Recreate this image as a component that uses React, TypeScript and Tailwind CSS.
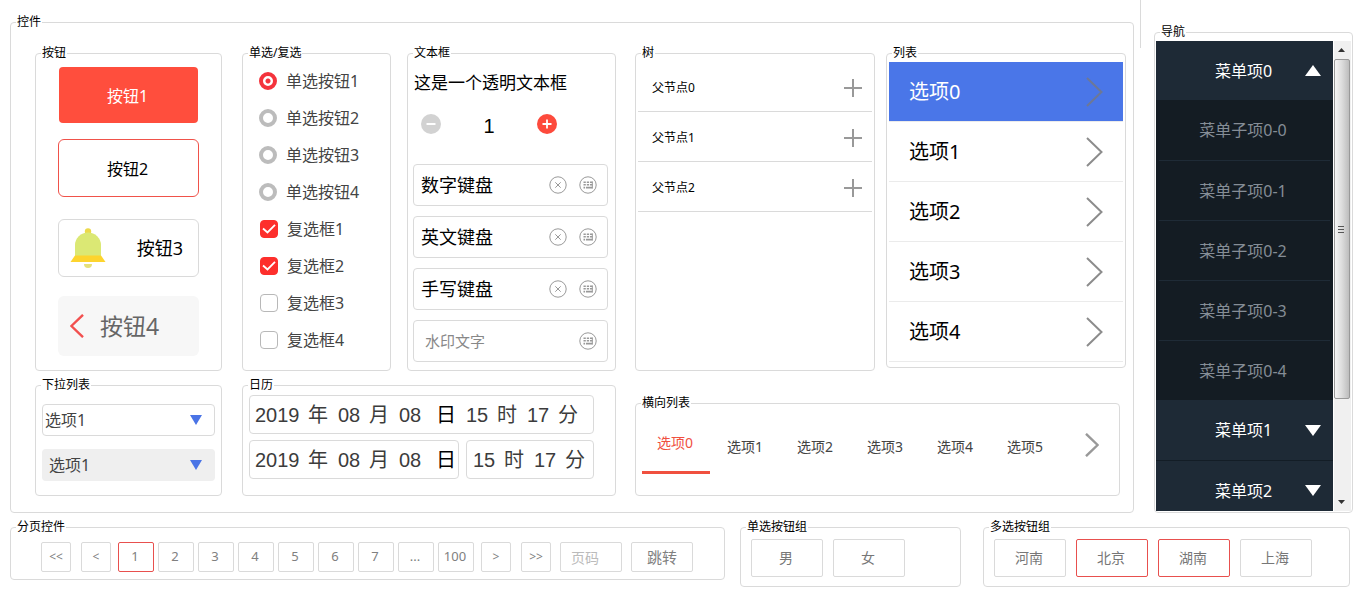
import { ReactNode } from 'react'
import { clsx } from 'clsx'

const radios = ['单选按钮1', '单选按钮2', '单选按钮3', '单选按钮4']
const checks = [
  { label: '复选框1', checked: true },
  { label: '复选框2', checked: true },
  { label: '复选框3', checked: false },
  { label: '复选框4', checked: false },
]
const keyboards = ['数字键盘', '英文键盘', '手写键盘']
const nodes = ['父节点0', '父节点1', '父节点2']
const options = ['选项0', '选项1', '选项2', '选项3', '选项4']
const tabs = ['选项0', '选项1', '选项2', '选项3', '选项4', '选项5']
const subItems = ['菜单子项0-0', '菜单子项0-1', '菜单子项0-2', '菜单子项0-3', '菜单子项0-4']
const pages = ['1', '2', '3', '4', '5', '6', '7', '...', '100']
const genders = ['男', '女']
const provinces = [
  { label: '河南', checked: false },
  { label: '北京', checked: true },
  { label: '湖南', checked: true },
  { label: '上海', checked: false },
]

function Panel({ title, className, children }: { title: string; className?: string; children: ReactNode }) {
  return (
    <fieldset className={clsx('min-w-0 rounded border border-[#dadada]', className)}>
      <legend className="ml-[5px] px-px text-xs leading-4 text-black">{title}</legend>
      {children}
    </fieldset>
  )
}

function BellIcon() {
  return (
    <svg viewBox="0 0 36 40" className="h-10 w-9" aria-hidden="true">
      <circle cx="18" cy="3.5" r="3.2" fill="#ecd94a" />
      <path d="M14 36h8a4 4 0 0 1-8 0z" fill="#e6e07a" />
      <path d="M5 28V17a13 12.5 0 0 1 26 0v11z" fill="#dbe874" />
      <path d="M5 27.500h26L35.500 34H.5z" fill="#fdd42e" />
    </svg>
  )
}

function Chevron({ className, width = 2 }: { className: string; width?: number }) {
  return (
    <svg viewBox="0 0 17 30" className={className} fill="none" stroke="currentColor" strokeWidth={width} aria-hidden="true">
      <path d="M1 1l14.500 14L1 29" />
    </svg>
  )
}

function ClearIcon() {
  return (
    <svg viewBox="0 0 18 18" className="size-[18px]" fill="none" stroke="#999" aria-hidden="true">
      <circle cx="9" cy="9" r="8.200" />
      <path d="M6.300 6.300l5.400 5.400M11.700 6.300l-5.400 5.400" />
    </svg>
  )
}

function KeyboardIcon() {
  return (
    <svg viewBox="0 0 18 18" className="size-[18px]" fill="none" stroke="#999" aria-hidden="true">
      <circle cx="9" cy="9" r="8.200" />
      <path d="M4.500 6.300h2.300M7.800 6.300h2.300M11 6.300h2.500M4.500 8.700h2.300M7.800 8.700h2.300M11 8.700h2.500M4.500 11.600h1.600M7 11.600h6.500" strokeWidth="1.600" />
      <path d="M13.300 5.500v7" />
    </svg>
  )
}

function Triangle({ up, className }: { up?: boolean; className: string }) {
  return (
    <svg viewBox="0 0 16 11" preserveAspectRatio="none" className={className} fill="currentColor" aria-hidden="true">
      <path d={up ? 'M8 0l8 11H0z' : 'M0 0h16L8 11z'} />
    </svg>
  )
}

function DropDown({ label, className }: { label: string; className: string }) {
  return (
    <div className="relative">
      <select aria-label={label} className={clsx('block h-8 w-full appearance-none rounded text-base leading-5 text-[#444]', className)}>
        <option>选项1</option>
      </select>
      <Triangle className="pointer-events-none absolute top-[11px] right-[13px] h-[10px] w-3 text-[#4a74e6]" />
    </div>
  )
}

function DatePart({ value, unit, label, wide, dark }: { value: string; unit: string; label: string; wide?: boolean; dark?: boolean }) {
  return (
    <label className="flex items-center">
      <input
        aria-label={label}
        defaultValue={value}
        className={clsx('bg-transparent font-["Liberation_Sans",sans-serif]', wide ? 'w-[45px]' : 'w-[23px]')}
      />
      <span className={dark ? 'ml-[14px] text-black' : 'ml-2'}>{unit}</span>
    </label>
  )
}

function DateFields() {
  return (
    <>
      <DatePart value="2019" unit="年" label="年" wide />
      <DatePart value="08" unit="月" label="月" />
      <DatePart value="08" unit="日" label="日" dark />
    </>
  )
}

function TimeFields() {
  return (
    <>
      <DatePart value="15" unit="时" label="时" />
      <DatePart value="17" unit="分" label="分" />
    </>
  )
}

function ButtonsPanel() {
  return (
    <Panel title="按钮">
      <div className="flex flex-col px-[22px] pt-1.5 pb-[14px]">
        <button type="button" className="mx-px h-14 rounded bg-[#ff4e3d] pt-px pr-0.5 text-base text-white">按钮1</button>
        <button type="button" className="mt-4 h-[58px] rounded-md border border-[#f0524a] bg-white pt-px pr-0.5 text-base text-black">按钮2</button>
        <button type="button" className="mt-[22px] flex h-[58px] items-center justify-between rounded-md border border-[#dadada] pr-[15px] pl-[11px] text-lg text-black">
          <BellIcon />
          按钮3
        </button>
        <button type="button" className="mt-[19px] flex h-[60px] items-center gap-4 rounded-md bg-[#f7f7f7] pl-3 text-[23px] text-[#666]">
          <Chevron className="h-6 w-[14px] rotate-180 text-[#f2504f]" width={3} />
          按钮4
        </button>
      </div>
    </Panel>
  )
}

function ChoicePanel() {
  return (
    <Panel title="单选/复选">
      <div className="pt-px pb-3 pl-4 text-base leading-5 text-[#444]">
        {radios.map((label, i) => (
          <label key={label} className="flex h-[37px] items-center gap-[9px]">
            <input
              type="radio"
              name="choice"
              defaultChecked={i === 0}
              className="size-[18px] appearance-none rounded-full border-4 border-[#bcbcbc] bg-white checked:border-[#f4333c] checked:bg-[radial-gradient(circle,#f4333c_2px,#fff_3px)]"
            />
            {label}
          </label>
        ))}
        {checks.map((item) => (
          <label key={item.label} className="flex h-[37px] items-center gap-[9px] pl-px">
            <span className="grid size-[18px] place-items-center">
              <input
                type="checkbox"
                defaultChecked={item.checked}
                className="col-start-1 row-start-1 size-[18px] appearance-none rounded border border-[#b8b8b8] checked:border-[#fd2f2c] checked:bg-[#fd2f2c]"
              />
              <svg viewBox="0 0 18 18" className="pointer-events-none col-start-1 row-start-1 size-[18px]" fill="none" stroke="#fff" strokeWidth="1.800" aria-hidden="true">
                <path d="M3 8.500l4.500 4L15 4.800" />
              </svg>
            </span>
            {item.label}
          </label>
        ))}
      </div>
    </Panel>
  )
}

function TextPanel() {
  return (
    <Panel title="文本框">
      <div className="pt-1.5 pr-[7px] pb-2 pl-[5px]">
        <input aria-label="透明文本框" defaultValue="这是一个透明文本框" className="block h-7 w-full bg-transparent pl-px text-[17px] text-black" />
        <div className="mt-[15px] ml-2 flex h-7 w-[136px] items-center justify-between">
          <button type="button" aria-label="减少">
            <svg viewBox="0 0 20 20" className="size-5" aria-hidden="true">
              <circle cx="10" cy="10" r="10" fill="#d2d2d2" />
              <path d="M5.500 10h9" stroke="#fff" strokeWidth="2" />
            </svg>
          </button>
          <input aria-label="数量" defaultValue="1" className='w-10 bg-transparent pt-1 text-center font-["Liberation_Sans",sans-serif] text-xl leading-6 text-black' />
          <button type="button" aria-label="增加">
            <svg viewBox="0 0 20 20" className="size-5" aria-hidden="true">
              <circle cx="10" cy="10" r="10" fill="#fd4a3c" />
              <path d="M5.500 10h9M10 5.500v9" stroke="#fff" strokeWidth="1.800" />
            </svg>
          </button>
        </div>
        <div className="mt-[26px] flex flex-col gap-[10px]">
          {keyboards.map((name) => (
            <div key={name} className="flex h-[42px] items-center rounded-sm border border-[#dadada] pr-[10px] pl-[7px]">
              <input aria-label={name} defaultValue={name} className="min-w-0 flex-1 bg-transparent text-lg leading-6 text-black" />
              <button type="button" aria-label="清除" className="mr-3"><ClearIcon /></button>
              <button type="button" aria-label="键盘"><KeyboardIcon /></button>
            </div>
          ))}
          <div className="flex h-[42px] items-center rounded-sm border border-[#dadada] pr-[10px] pl-[11px]">
            <input aria-label="水印" placeholder="水印文字" className="min-w-0 flex-1 bg-transparent text-[15px] leading-6 placeholder:text-[#888]" />
            <button type="button" aria-label="键盘"><KeyboardIcon /></button>
          </div>
        </div>
      </div>
    </Panel>
  )
}

function TreePanel() {
  return (
    <Panel title="树">
      <ul className="px-0.5 pt-px">
        {nodes.map((node) => (
          <li key={node} className="flex h-[50px] items-center justify-between border-b border-[#dadada] pt-0.5 pr-[10px] pl-[14px] text-xs text-black">
            {node}
            <button type="button" aria-label={'展开' + node}>
              <svg viewBox="0 0 18 18" className="size-[18px]" stroke="#999" strokeWidth="2" aria-hidden="true">
                <path d="M0 9h18M9 0v18" />
              </svg>
            </button>
          </li>
        ))}
      </ul>
    </Panel>
  )
}

function ListPanel() {
  return (
    <Panel title="列表" className="self-start">
      <ul className="px-0.5 pt-px pb-[5px]">
        {options.map((option, i) => (
          <li
            key={option}
            className={clsx(
              'flex h-[60px] items-center justify-between border-b border-[#ebebeb] bg-clip-padding pr-5 pl-5 text-xl',
              i === 0 ? 'bg-[#4a76e8] text-white' : 'text-black'
            )}
          >
            {option}
            <Chevron className={clsx('h-[30px] w-[17px]', i === 0 ? 'text-[#6d7896]' : 'text-[#8c8c8c]')} />
          </li>
        ))}
      </ul>
    </Panel>
  )
}

function TabsPanel() {
  return (
    <Panel title="横向列表" className="mt-6 mr-1.5">
      <div className="flex items-center pt-[3px] pr-5 pb-[21px] pl-1.5">
        {tabs.map((tab, i) => (
          <button
            key={tab}
            type="button"
            className={clsx(
              'mr-0.5 h-[60px] w-[68px] border-b-3 pr-0.5 text-sm',
              i === 0 ? 'border-[#f0503f] text-[#f0503f]' : 'border-transparent pt-2 text-[#444]'
            )}
          >
            {tab}
          </button>
        ))}
        <button type="button" aria-label="下一页" className="ml-auto pt-0.5">
          <Chevron className="h-6 w-[14px] text-[#999]" width={3} />
        </button>
      </div>
    </Panel>
  )
}

function NavPanel() {
  return (
    <Panel title="导航" className="mt-[10px] w-[199px] shrink-0">
      <div className="flex h-[471px] overflow-hidden px-px pt-px">
        <nav className="h-full flex-1 overflow-hidden bg-[#1e2a36] text-base">
          <a href="#" className="relative flex h-[59px] items-center justify-center pr-0.5 text-white">
            菜单项0
            <Triangle up className="absolute right-3 h-[11px] w-4" />
          </a>
          <div className="bg-[#141c23] text-[#858d96]">
            {subItems.map((item, i) => (
              <a
                key={item}
                href="#"
                className={clsx('mx-[3px] flex h-[60px] items-center justify-center pr-[3px]', i > 0 && 'border-t border-[#1f2b36]')}
              >
                {item}
              </a>
            ))}
          </div>
          {['菜单项1', '菜单项2'].map((item, i) => (
            <a
              key={item}
              href="#"
              className={clsx('relative flex h-[60px] items-center justify-center pr-0.5 text-white', i > 0 && 'border-t border-[#131d26]')}
            >
              {item}
              <Triangle className="absolute right-3 h-[11px] w-4" />
            </a>
          ))}
        </nav>
        <div className="ml-px flex w-[17px] flex-col items-start bg-[#f0f0f0] text-[#333]">
          <Triangle up className="my-[7px] ml-1 h-1 w-[7px] shrink-0" />
          <div className="flex h-[340px] w-4 flex-col items-start justify-center gap-0.5 rounded-xs border border-[#999] bg-linear-to-r from-[#f5f5f5] via-[#dcdcdc] to-[#bdbdbd] pl-[3px]">
            <span className="h-px w-1.5 bg-[#555]" />
            <span className="h-px w-1.5 bg-[#555]" />
            <span className="h-px w-1.5 bg-[#555]" />
          </div>
          <Triangle className="mt-auto mb-[7px] ml-1 h-1 w-[7px] shrink-0" />
        </div>
      </div>
    </Panel>
  )
}

function PagingPanel() {
  const box = 'h-[30px] rounded-xs border border-[#dadada] text-center'
  return (
    <Panel title="分页控件" className="self-start">
      <div className="flex pt-[7px] pb-[7px] pl-[30px] text-[13px] text-[#808080]">
        <button type="button" className={clsx(box, 'w-[30px] text-xs')}>&lt;&lt;</button>
        <button type="button" className={clsx(box, 'ml-[10px] w-[30px] text-xs')}>&lt;</button>
        <div className="mx-[7px] flex gap-1">
          {pages.map((page, i) => (
            <button
              key={page}
              type="button"
              className={clsx('h-[30px] w-9 rounded-xs border pr-0.5', i === 0 ? 'border-[#e8504e]' : 'border-[#dadada]')}
            >
              {page}
            </button>
          ))}
        </div>
        <button type="button" className={clsx(box, 'w-[30px] text-xs')}>&gt;</button>
        <button type="button" className={clsx(box, 'ml-[10px] w-[30px] text-xs')}>&gt;&gt;</button>
        <input aria-label="页码" placeholder="页码" className="ml-[9px] h-[30px] w-[62px] rounded-xs border border-[#dadada] px-[10px] text-sm placeholder:text-[#bbb]" />
        <button type="button" className={clsx(box, 'ml-[9px] w-[62px] text-[15px]')}>跳转</button>
      </div>
    </Panel>
  )
}

function Toggle({ type, name, label, checked }: { type: 'radio' | 'checkbox'; name: string; label: string; checked?: boolean }) {
  return (
    <label className="relative flex h-[38px] w-[72px] items-center justify-center rounded-xs border border-[#dadada] pr-0.5 has-checked:border-[#e8504e]">
      <input type={type} name={name} defaultChecked={checked} className="sr-only" />
      {label}
    </label>
  )
}

export default function App() {
  return (
    <main className='relative bg-white pt-[14px] font-["Noto_Sans","Noto_Sans_CJK_SC",sans-serif]'>
      <span className="absolute top-0 right-[221px] h-12 w-px bg-[#dadada]" />

      <div className="flex gap-5 pr-[9px] pl-[10px]">
        <Panel title="控件" className="flex-1">
          <div className="grid grid-cols-[188fr_374fr_491fr] gap-x-[19px] pt-[15px] pr-[7px] pb-4 pl-6">
            <div className="pr-px">
              <ButtonsPanel />
              <Panel title="下拉列表" className="mt-1.5">
                <div className="flex flex-col gap-[13px] px-1.5 pt-[11px] pb-[14px]">
                  <DropDown label="下拉列表1" className="border border-[#dadada] bg-white pl-0.5" />
                  <DropDown label="下拉列表2" className="bg-[#efefef] pl-[7px]" />
                </div>
              </Panel>
            </div>

            <div>
              <div className="grid grid-cols-[149fr_209fr] gap-4">
                <ChoicePanel />
                <TextPanel />
              </div>
              <Panel title="日历" className="mt-1.5">
                <div className="pt-0.5 pr-[21px] pb-4 pl-1.5 text-xl leading-6 text-[#3c3c3c]">
                  <div className="flex h-[39px] items-center gap-[10px] rounded-sm border border-[#dadada] pl-[5px]">
                    <DateFields />
                    <TimeFields />
                  </div>
                  <div className="mt-1.5 flex gap-[7px]">
                    <div className="flex h-[39px] w-[210px] items-center gap-[10px] rounded-sm border border-[#dadada] pl-[5px]">
                      <DateFields />
                    </div>
                    <div className="flex h-[39px] flex-1 items-center gap-[10px] rounded-sm border border-[#dadada] pl-1.5">
                      <TimeFields />
                    </div>
                  </div>
                </div>
              </Panel>
            </div>

            <div>
              <div className="grid h-[326px] grid-cols-2 gap-[11px]">
                <TreePanel />
                <ListPanel />
              </div>
              <TabsPanel />
            </div>
          </div>
        </Panel>
        <NavPanel />
      </div>

      <div className="mt-1.5 grid grid-cols-[715fr_221fr_374fr] gap-[15px] pr-3 pl-[10px]">
        <PagingPanel />
        <Panel title="单选按钮组">
          <div className="flex gap-[10px] pt-1 pb-[9px] pl-[10px] text-sm text-[#777]">
            {genders.map((label) => (
              <Toggle key={label} type="radio" name="gender" label={label} />
            ))}
          </div>
        </Panel>
        <Panel title="多选按钮组" className="ml-[7px]">
          <div className="flex gap-[10px] pt-1 pb-[9px] pl-[10px] text-sm text-[#777]">
            {provinces.map((item) => (
              <Toggle key={item.label} type="checkbox" name="province" label={item.label} checked={item.checked} />
            ))}
          </div>
        </Panel>
      </div>
    </main>
  )
}
